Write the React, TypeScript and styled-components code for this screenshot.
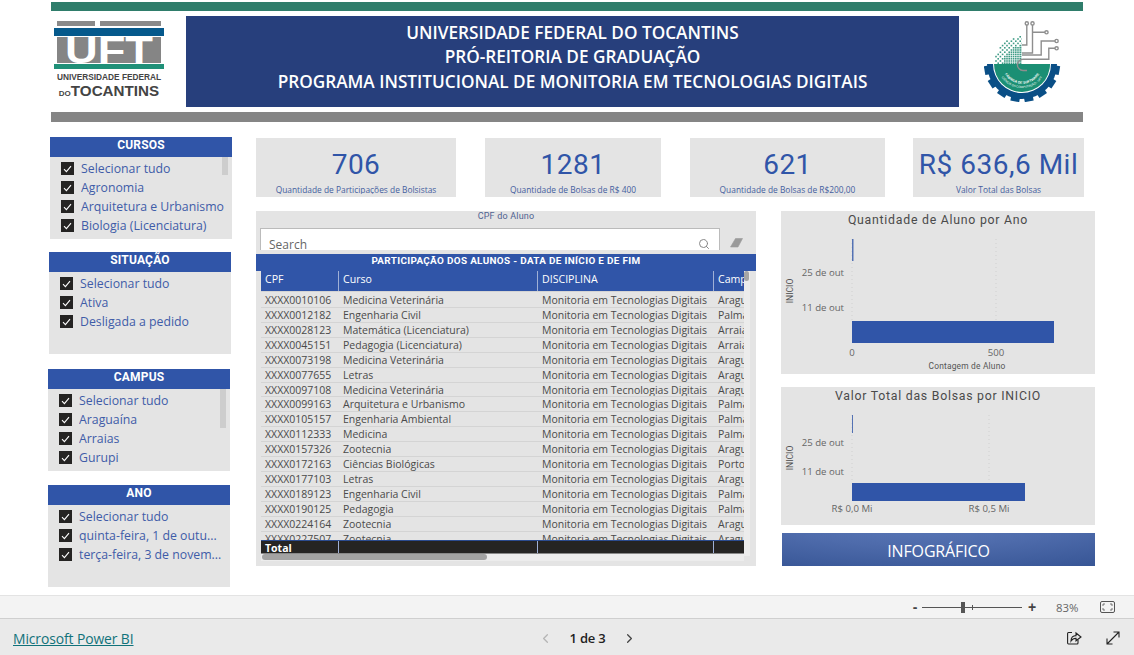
import React from "react";
import styled, { createGlobalStyle } from "styled-components";
import { ChevronLeft, ChevronRight, Search } from "lucide-react";

const GlobalStyle = createGlobalStyle`
  html, body { margin: 0; padding: 0; background: #fff; overflow: hidden; }
  * { box-sizing: border-box; }
  body { font-family: "Open Sans", "Liberation Sans", sans-serif; }
`;

const BLUE = "#3055a8";
const PANEL = "#e4e4e4";
const DIN = `Roboto, "Liberation Sans", sans-serif`;

const Page = styled.div`
  width: 1134px;
  height: 655px;
  display: flex;
  flex-direction: column;
`;
const Canvas = styled.div`
  height: 595px;
  overflow: hidden;
`;
const Rule = styled.div<{ $color: string; $h: number; $top?: number }>`
  width: 1032px;
  height: ${({ $h }) => $h}px;
  margin: ${({ $top }) => $top ?? 0}px 0 0 51px;
  background: ${({ $color }) => $color};
`;
const Masthead = styled.header`
  height: 101px;
  margin-left: 51px;
  width: 1032px;
  display: flex;
  align-items: flex-start;
`;
const LogoBox = styled.div`
  width: 135px;
  padding: 10px 0 0 3px;
  flex: none;
  svg { display: block; }
`;
const LogoCaption = styled.div`
  width: 110px;
  color: #444;
  font-family: "Liberation Sans", sans-serif;
  font-weight: 700;
  text-align: center;
`;
const LogoLineA = styled.div`
  font-size: 8.3px;
  line-height: 11px;
  margin-top: 2px;
  white-space: nowrap;
`;
const LogoLineB = styled.div`
  font-size: 15.2px;
  line-height: 16px;
  white-space: nowrap;
  small { font-size: 8px; }
`;
const Banner = styled.div`
  width: 773px;
  height: 91px;
  margin-top: 5px;
  background: #273f7c;
  color: #fff;
  display: flex;
  flex-direction: column;
  align-items: center;
  justify-content: center;
  font-size: 17.2px;
  font-weight: 600;
  line-height: 24.5px;
  padding-bottom: 8px;
`;
const Emblem = styled.div`
  flex: 1;
  display: flex;
  justify-content: center;
  padding: 9px 0 0 3px;
  svg { display: block; }
`;
const Body = styled.div`
  display: flex;
  margin-left: 48px;
`;
const Sidebar = styled.aside`
  width: 184px;
  flex: none;
`;
const SlicerBox = styled.section<{ $shift: number; $top: number }>`
  position: relative;
  width: 182px;
  height: 102px;
  margin: ${({ $top }) => $top}px 0 0 ${({ $shift }) => $shift}px;
  background: ${PANEL};
`;
const SlicerHead = styled.h3`
  margin: 0;
  height: 20px;
  background: ${BLUE};
  color: #fff;
  font: 700 12px/17px ${DIN};
  letter-spacing: 0.2px;
  text-align: center;
`;
const SlicerList = styled.ul`
  list-style: none;
  margin: 0;
  padding: 2px 0 0 11px;
`;
const SlicerRow = styled.li`
  height: 19px;
  display: flex;
  align-items: center;
  gap: 7px;
  color: #3f5ca8;
  font-size: 12.3px;
`;
const CheckMark = styled.span`
  width: 13px;
  height: 13px;
  flex: none;
  background: #252423;
  display: flex;
  align-items: center;
  justify-content: center;
`;
const SlicerText = styled.span`
  width: 150px;
  white-space: nowrap;
  overflow: hidden;
`;
const SlicerThumb = styled.div<{ $h: number }>`
  position: absolute;
  top: 20px;
  right: 4px;
  width: 6px;
  height: ${({ $h }) => $h}px;
  background: #cdcdcd;
`;
const Main = styled.main`
  margin-left: 24px;
  padding-top: 16px;
  width: 840px;
`;
const CardRow = styled.div`
  display: flex;
  gap: 29px;
`;
const Card = styled.div<{ $w: number; $gap?: number }>`
  width: ${({ $w }) => $w}px;
  margin-left: ${({ $gap }) => $gap ?? 0}px;
  height: 59px;
  background: ${PANEL};
  overflow: hidden;
  text-align: center;
`;
const CardValue = styled.div`
  margin-top: 9px;
  font: 400 28px/36px ${DIN};
  letter-spacing: 0.5px;
  color: ${BLUE};
`;
const CardLabel = styled.div`
  font-size: 8.4px;
  line-height: 14px;
  height: 11px;
  overflow: hidden;
  color: #44609f;
  white-space: nowrap;
`;
const Lower = styled.div`
  display: flex;
  gap: 25px;
  margin-top: 14px;
`;
const TablePanel = styled.section`
  position: relative;
  width: 500px;
  height: 355px;
  background: ${PANEL};
`;
const FilterZone = styled.div`
  height: 39px;
  overflow: hidden;
`;
const FilterLabel = styled.div`
  height: 17px;
  font: 400 9px/11px ${DIN};
  letter-spacing: 0.2px;
  color: #4f6290;
  text-align: center;
`;
const FilterRow = styled.div`
  display: flex;
  align-items: flex-start;
  padding-left: 4px;
  gap: 9px;
`;
const SearchBox = styled.div`
  width: 460px;
  height: 30px;
  background: #fff;
  border: 1px solid #bbb;
  display: flex;
  align-items: flex-start;
  justify-content: space-between;
  padding: 8px 9px 0 8px;
  font-size: 12px;
  line-height: 16px;
  color: #666;
`;
const TableTitle = styled.h2`
  margin: 4px 0 0;
  height: 17px;
  background: ${BLUE};
  color: #fff;
  font: 700 9.9px/14px ${DIN};
  letter-spacing: 0.35px;
  text-align: center;
`;
const TableWrap = styled.div`
  margin-left: 5px;
  width: 483px;
  overflow: hidden;
`;
const Row = styled.div<{ $kind?: "head" | "total" }>`
  display: grid;
  grid-template-columns: 78px 199px 176px 30px;
  height: ${({ $kind }) => ($kind === "head" ? "21px" : $kind === "total" ? "14px" : "14.93px")};
  background: ${({ $kind }) => ($kind === "head" ? BLUE : $kind === "total" ? "#252423" : "transparent")};
  color: ${({ $kind }) => ($kind ? "#fff" : "#4a4a4a")};
  border-bottom: 1px solid ${({ $kind }) => ($kind === "total" ? "#888" : "#d4d4d4")};
  border-top: ${({ $kind }) => ($kind === "total" ? "1px solid #2b4b8f" : "none")};
  font-size: ${({ $kind }) => ($kind === "head" ? "10.6px" : "10.5px")};
  font-weight: ${({ $kind }) => ($kind === "total" ? 700 : 400)};
  line-height: ${({ $kind }) => ($kind === "head" ? "17px" : "14px")};
  white-space: nowrap;
`;
const Cell = styled.div<{ $kind?: "head" | "total" }>`
  overflow: hidden;
  padding-left: 4px;
  border-right: 1px solid ${({ $kind }) => ($kind ? "#9fb0d6" : "transparent")};
  &:last-child { border-right: none; }
`;
const RowsClip = styled.div`
  height: 248px;
  overflow: hidden;
  padding-top: 1px;
`;
const VTrack = styled.div`
  position: absolute;
  left: 488px;
  top: 60px;
  width: 6px;
  height: 285px;
  background: #ececec;
`;
const VThumb = styled.div`
  width: 5px;
  height: 10px;
  background: #a6a6a6;
  border-radius: 3px;
`;
const HTrack = styled.div`
  margin: 0 0 0 5px;
  width: 483px;
  height: 7px;
  background: #ececec;
`;
const HThumb = styled.div`
  width: 225px;
  height: 6px;
  margin-left: 1px;
  background: #a3a3a3;
  border-radius: 3px;
`;
const RightColumn = styled.div`
  width: 314px;
  flex: none;
  display: flex;
  flex-direction: column;
`;
const ChartPanel = styled.figure<{ $h: number; $mt?: number }>`
  margin: ${({ $mt }) => $mt ?? 0}px 0 0;
  height: ${({ $h }) => $h}px;
  background: ${PANEL};
  svg { display: block; }
`;
const InfoButton = styled.button`
  width: 313px;
  height: 33px;
  margin: 8px 0 0 1px;
  border: none;
  padding: 3px 0 0;
  color: #fff;
  font: 400 16px "Open Sans", sans-serif;
  letter-spacing: -0.15px;
  background: radial-gradient(ellipse 120% 220% at 45% -60%, #5f7dbd 0%, #4e6bab 45%, #2f4e8e 100%);
`;
const ZoomBar = styled.div`
  height: 24px;
  background: #f3f3f3;
  border-top: 1px solid #e3e3e3;
  border-bottom: 1px solid #cfcfcf;
  display: flex;
  align-items: center;
  justify-content: flex-end;
  color: #555;
`;
const ZoomSign = styled.span`
  font: 700 14px/14px "Liberation Sans", sans-serif;
  color: #444;
  width: 10px;
  text-align: center;
`;
const ZoomTrack = styled.div`
  position: relative;
  width: 100px;
  height: 1px;
  margin: 0 5px 0 2px;
  background: #555;
`;
const ZoomThumb = styled.div`
  position: absolute;
  left: 39px;
  top: -5px;
  width: 4px;
  height: 11px;
  background: #555;
`;
const ZoomTick = styled.div`
  position: absolute;
  left: 50px;
  top: -2px;
  width: 1px;
  height: 5px;
  background: #555;
`;
const ZoomValue = styled.span`
  font-size: 11.4px;
  margin: 0 0 0 19px;
  width: 32px;
  color: #666;
`;
const FitIcon = styled.div`
  margin: 0 19px 0 12px;
  line-height: 0;
`;
const Footer = styled.footer`
  flex: 1;
  background: #eaeaea;
  display: grid;
  grid-template-columns: 1fr 1fr 1fr;
  align-items: center;
  padding: 2px 13px 0;
`;
const PowerBiLink = styled.a`
  color: #11727a;
  text-decoration: underline;
  font-size: 13.9px;
  letter-spacing: -0.1px;
`;
const Pager = styled.div`
  display: flex;
  align-items: center;
  justify-content: center;
  gap: 16px;
  font-size: 13px;
  font-weight: 600;
  letter-spacing: -0.2px;
  color: #222;
  margin-left: 41px;
  white-space: nowrap;
`;
const FooterTools = styled.div`
  display: flex;
  justify-content: flex-end;
  gap: 24px;
  line-height: 0;
  margin: -1px 1px 0 0;
`;

function UftMark() {
  return (
    <svg width="110" height="49" viewBox="0 0 110 49">
      <rect x="3" y="0" width="38" height="5" fill="#8a8a8a" />
      <rect x="46" y="0" width="61" height="5" fill="#8a8a8a" />
      <rect x="0" y="7" width="110" height="8" fill="#05598c" />
      <rect x="3" y="16" width="104" height="26" fill="#858585" />
      <text x="55" y="41.5" textAnchor="middle" fontFamily="'Liberation Sans', sans-serif" fontWeight="700" fontSize="37" textLength="88" lengthAdjust="spacingAndGlyphs" fill="#fff">UFT</text>
      <rect x="0" y="43" width="110" height="5" fill="#1f9078" />
    </svg>
  );
}

function GearEmblem() {
  const teeth = [10, 33, 56, 79, 101, 124, 147, 170];
  const dots: React.ReactNode[] = [];
  for (let c = 0; c < 14; c++) {
    for (let r = 0; r < 13; r++) {
      const x = 5 + c * 2.2;
      const y = 16 + r * 2.2;
      const d = Math.hypot(x - 35, y - 44);
      const keep = d < 20 || (d < 29 && (c + r) % 2 === 0);
      if (keep) dots.push(<rect key={`${c}-${r}`} x={x} y={y} width="1.6" height="1.6" fill="#3f9c86" />);
    }
  }
  return (
    <svg width="78" height="82" viewBox="-4 0 78 82">
      {teeth.map((a) => (
        <rect key={a} x="-4.5" y="-38" width="9" height="6" fill="#0a4f86" transform={`translate(34 44) rotate(${a + 90})`} />
      ))}
      <path d="M-1 44 A35 35 0 0 0 69 44 L63 44 A29 29 0 0 1 5 44 Z" fill="#0a4f86" />
      <path d="M6 44 A28 28 0 0 0 62 44 Z" fill="#1b8f74" />
      {dots}
      <rect x="34" y="16" width="28" height="28" fill="#fff" />
      <path d="M34 44 H62 A28 28 0 0 1 60 52 H34 Z" fill="#1b8f74" />
      <g fill="none" stroke="#8e8e8e" strokeWidth="1.4">
        <path d="M38.8 5 V25 H34 M44.5 5 V33 H34 M44.5 12.3 H57 M67 21 H53.2 V35 H34 M67 28.3 H60.8 V39.3 H35 A5.6 5.6 0 0 0 35 50.5 H39" />
        <circle cx="38.8" cy="3.4" r="1.6" />
        <circle cx="44.5" cy="3.4" r="1.6" />
        <circle cx="58.5" cy="12.3" r="1.6" />
        <circle cx="68.6" cy="21" r="1.6" />
        <circle cx="68.6" cy="28.3" r="1.6" />
      </g>
      <defs>
        <path id="arcA" d="M15 50 A20 20 0 0 0 53 50" />
        <path id="arcB" d="M10 50 A25 25 0 0 0 58 50" />
      </defs>
      <text fontSize="3.4" fontWeight="700" fill="#fff" fontFamily="'Liberation Sans', sans-serif">
        <textPath href="#arcA" startOffset="50%" textAnchor="middle">FÁBRICA DE SOFTWARE</textPath>
      </text>
      <text fontSize="3" fill="#fff" fontFamily="'Liberation Sans', sans-serif">
        <textPath href="#arcB" startOffset="50%" textAnchor="middle">CIÊNCIA DA COMPUTAÇÃO - UFT</textPath>
      </text>
    </svg>
  );
}

function Slicer({ title, items, shift, top, thumb }: { title: string; items: string[]; shift: number; top: number; thumb?: number }) {
  return (
    <SlicerBox $shift={shift} $top={top}>
      <SlicerHead>{title}</SlicerHead>
      <SlicerList>
        {items.map((t) => (
          <SlicerRow key={t}>
            <CheckMark>
              <svg width="9" height="8" viewBox="0 0 9 8">
                <path d="M1 4.2 L3.4 6.6 L8 1.2" fill="none" stroke="#fff" strokeWidth="1.1" />
              </svg>
            </CheckMark>
            <SlicerText>{t}</SlicerText>
          </SlicerRow>
        ))}
      </SlicerList>
      {thumb ? <SlicerThumb $h={thumb} /> : null}
    </SlicerBox>
  );
}

type ChartProps = {
  title: string;
  height: number;
  titleY: number;
  thin: [number, number, number];
  big: [number, number, number];
  gridX: number;
  labelYs: [number, number];
  ticks: [string, string];
  tickY: number;
  axisY: number;
  axisTitle?: string;
};

function BarChart({ title, height, titleY, thin, big, gridX, labelYs, ticks, tickY, axisY, axisTitle }: ChartProps) {
  const labelStyle = { fontFamily: "'Open Sans', sans-serif", fontSize: 9.6, fill: "#666" };
  return (
    <svg width="314" height={height} viewBox={`0 0 314 ${height}`}>
      <text x="157" y={titleY} textAnchor="middle" fontFamily="Roboto, sans-serif" fontSize="12.3" letterSpacing="0.75" fill="#4a4a4a">{title}</text>
      <line x1="71" x2="71" y1={thin[0]} y2={big[0]} stroke="#d0d0d0" strokeDasharray="1 3" />
      <line x1={gridX} x2={gridX} y1={thin[0]} y2={big[0]} stroke="#d0d0d0" strokeDasharray="1 3" />
      <rect x="71" y={thin[0]} width={thin[2]} height={thin[1]} fill={BLUE} opacity="0.8" />
      <rect x="71" y={big[0]} width={big[2]} height={big[1]} fill={BLUE} />
      <text x="63" y={labelYs[0]} textAnchor="end" style={labelStyle}>25 de out</text>
      <text x="63" y={labelYs[1]} textAnchor="end" style={labelStyle}>11 de out</text>
      <text x="71" y={tickY} textAnchor="middle" style={labelStyle}>{ticks[0]}</text>
      <text x={gridX} y={tickY} textAnchor="middle" style={labelStyle}>{ticks[1]}</text>
      {axisTitle ? (
        <text x="186" y={tickY + 13} textAnchor="middle" fontFamily="Roboto, sans-serif" fontSize="8.4" letterSpacing="0.2" fill="#555">{axisTitle}</text>
      ) : null}
      <text transform={`translate(12 ${axisY}) rotate(-90)`} textAnchor="middle" fontFamily="Roboto, sans-serif" fontSize="8.6" fill="#555">INICIO</text>
    </svg>
  );
}

const CELL = "Monitoria em Tecnologias Digitais";
const students: [string, string, string][] = [
  ["XXXX0010106", "Medicina Veterinária", "Araguaína"],
  ["XXXX0012182", "Engenharia Civil", "Palmas"],
  ["XXXX0028123", "Matemática (Licenciatura)", "Arraias"],
  ["XXXX0045151", "Pedagogia (Licenciatura)", "Arraias"],
  ["XXXX0073198", "Medicina Veterinária", "Araguaína"],
  ["XXXX0077655", "Letras", "Araguaína"],
  ["XXXX0097108", "Medicina Veterinária", "Araguaína"],
  ["XXXX0099163", "Arquitetura e Urbanismo", "Palmas"],
  ["XXXX0105157", "Engenharia Ambiental", "Palmas"],
  ["XXXX0112333", "Medicina", "Palmas"],
  ["XXXX0157326", "Zootecnia", "Araguaína"],
  ["XXXX0172163", "Ciências Biológicas", "Porto Nacional"],
  ["XXXX0177103", "Letras", "Araguaína"],
  ["XXXX0189123", "Engenharia Civil", "Palmas"],
  ["XXXX0190125", "Pedagogia", "Palmas"],
  ["XXXX0224164", "Zootecnia", "Araguaína"],
  ["XXXX0227507", "Zootecnia", "Araguaína"],
];

export default function App() {
  return (
    <Page>
      <GlobalStyle />
      <Canvas>
        <Rule $color="#2f7d6b" $h={9} $top={2} />
        <Masthead>
          <LogoBox>
            <UftMark />
            <LogoCaption>
              <LogoLineA>UNIVERSIDADE FEDERAL</LogoLineA>
              <LogoLineB><small>DO</small>TOCANTINS</LogoLineB>
            </LogoCaption>
          </LogoBox>
          <Banner>
            <div>UNIVERSIDADE FEDERAL DO TOCANTINS</div>
            <div>PRÓ-REITORIA DE GRADUAÇÃO</div>
            <div>PROGRAMA INSTITUCIONAL DE MONITORIA EM TECNOLOGIAS DIGITAIS</div>
          </Banner>
          <Emblem>
            <GearEmblem />
          </Emblem>
        </Masthead>
        <Rule $color="#858585" $h={10} />
        <Body>
          <Sidebar>
            <Slicer title="CURSOS" shift={2} top={15} thumb={18} items={["Selecionar tudo", "Agronomia", "Arquitetura e Urbanismo", "Biologia (Licenciatura)"]} />
            <Slicer title="SITUAÇÃO" shift={1} top={13} items={["Selecionar tudo", "Ativa", "Desligada a pedido"]} />
            <Slicer title="CAMPUS" shift={0} top={15} thumb={39} items={["Selecionar tudo", "Araguaína", "Arraias", "Gurupi"]} />
            <Slicer title="ANO" shift={0} top={14} items={["Selecionar tudo", "quinta-feira, 1 de outu...", "terça-feira, 3 de novem..."]} />
          </Sidebar>
          <Main>
            <CardRow>
              <Card $w={200}><CardValue>706</CardValue><CardLabel>Quantidade de Participações de Bolsistas</CardLabel></Card>
              <Card $w={176}><CardValue>1281</CardValue><CardLabel>Quantidade de Bolsas de R$ 400</CardLabel></Card>
              <Card $w={195}><CardValue>621</CardValue><CardLabel>Quantidade de Bolsas de R$200,00</CardLabel></Card>
              <Card $w={171} $gap={-1}><CardValue>R$ 636,6 Mil</CardValue><CardLabel>Valor Total das Bolsas</CardLabel></Card>
            </CardRow>
            <Lower>
              <TablePanel>
                <FilterZone>
                  <FilterLabel>CPF do Aluno</FilterLabel>
                  <FilterRow>
                    <SearchBox>
                      Search
                      <Search size={12} color="#888" style={{ marginTop: 1 }} />
                    </SearchBox>
                    <svg width="15" height="26" viewBox="0 0 15 26">
                      <path d="M1.5 19 L6.5 10.5 H13.5 L9 19 Z" fill="#9a9a9a" stroke="#9a9a9a" strokeLinejoin="round" strokeWidth="0.6" />
                    </svg>
                  </FilterRow>
                </FilterZone>
                <TableTitle>PARTICIPAÇÃO DOS ALUNOS - DATA DE INÍCIO E DE FIM</TableTitle>
                <TableWrap>
                  <Row $kind="head">
                    {["CPF", "Curso", "DISCIPLINA", "Campus"].map((h) => (
                      <Cell key={h} $kind="head">{h}</Cell>
                    ))}
                  </Row>
                  <RowsClip>
                    {students.map(([cpf, course, campus]) => (
                      <Row key={cpf}>
                        <Cell>{cpf}</Cell>
                        <Cell>{course}</Cell>
                        <Cell>{CELL}</Cell>
                        <Cell>{campus}</Cell>
                      </Row>
                    ))}
                  </RowsClip>
                  <Row $kind="total">
                    <Cell $kind="total">Total</Cell>
                    <Cell $kind="total" />
                    <Cell $kind="total" />
                    <Cell $kind="total" />
                  </Row>
                </TableWrap>
                <HTrack><HThumb /></HTrack>
                <VTrack><VThumb /></VTrack>
              </TablePanel>
              <RightColumn>
                <ChartPanel $h={163}>
                  <BarChart
                    title="Quantidade de Aluno por Ano"
                    height={163}
                    titleY={13}
                    thin={[28, 22, 1.5]}
                    big={[110, 22, 202]}
                    gridX={215}
                    labelYs={[65, 100]}
                    ticks={["0", "500"]}
                    tickY={145}
                    axisY={80}
                    axisTitle="Contagem de Aluno"
                  />
                </ChartPanel>
                <ChartPanel $h={138} $mt={13}>
                  <BarChart
                    title="Valor Total das Bolsas por INICIO"
                    height={138}
                    titleY={13}
                    thin={[28, 18, 1]}
                    big={[96, 18, 173]}
                    gridX={208}
                    labelYs={[59, 88]}
                    ticks={["R$ 0,0 Mi", "R$ 0,5 Mi"]}
                    tickY={125}
                    axisY={71}
                  />
                </ChartPanel>
                <InfoButton>INFOGRÁFICO</InfoButton>
              </RightColumn>
            </Lower>
          </Main>
        </Body>
      </Canvas>
      <ZoomBar>
        <ZoomSign>-</ZoomSign>
        <ZoomTrack>
          <ZoomThumb />
          <ZoomTick />
        </ZoomTrack>
        <ZoomSign>+</ZoomSign>
        <ZoomValue>83%</ZoomValue>
        <FitIcon>
          <svg width="15" height="12" viewBox="0 0 15 12" fill="none" stroke="#555">
            <rect x="0.5" y="0.5" width="14" height="11" rx="1.5" />
            <path d="M3 5 V3 H5 M10 3 H12 V5 M12 7 V9 H10 M5 9 H3 V7" strokeWidth="0.8" />
          </svg>
        </FitIcon>
      </ZoomBar>
      <Footer>
        <div><PowerBiLink>Microsoft Power BI</PowerBiLink></div>
        <Pager>
          <ChevronLeft size={15} color="#b5b5b5" />
          <span>1 de 3</span>
          <ChevronRight size={15} color="#444" />
        </Pager>
        <FooterTools>
          <svg width="15" height="14" viewBox="0 0 15 14" fill="none" stroke="#222" strokeWidth="1.1">
            <path d="M5 1.5 H1.5 A1 1 0 0 0 .6 2.5 V12 A1 1 0 0 0 1.5 13 H10 A1 1 0 0 0 11 12 V9" />
            <path d="M4 10 C4 6.5 6 4.6 9 4.6 V2 L14 6 L9 9.8 V7.2 C7 7.2 5.2 8 4 10 Z" />
          </svg>
          <svg width="14" height="14" viewBox="0 0 14 14" fill="none" stroke="#222" strokeWidth="1.1">
            <path d="M1 13 L13 1 M7.5 1 H13 V6.5 M1 7.5 V13 H6.5" />
          </svg>
        </FooterTools>
      </Footer>
    </Page>
  );
}
